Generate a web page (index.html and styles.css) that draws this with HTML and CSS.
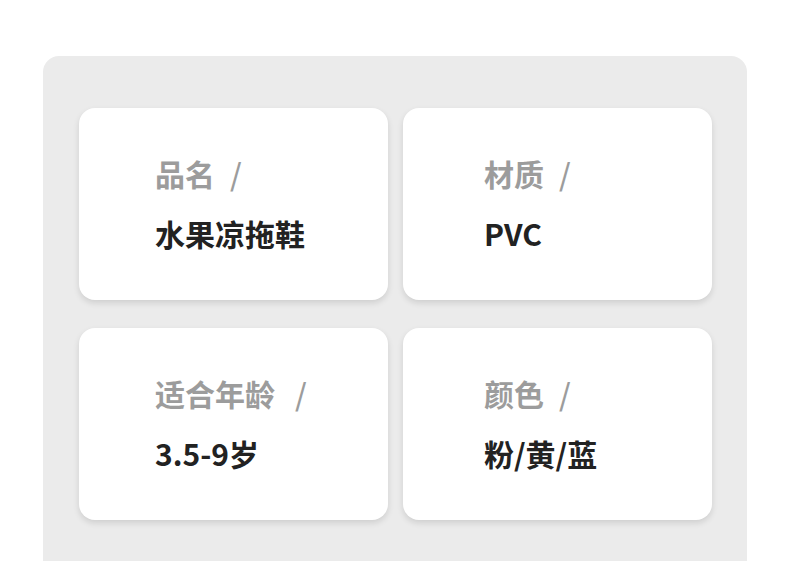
FILE: index.html
```
<!DOCTYPE html>
<html lang="zh">
<head>
<meta charset="utf-8">
<link rel="stylesheet" href="styles.css">
</head>
<body>
<div class="panel">
  <div class="grid">
    <div class="card left">
      <div class="label">品名<span class="slash s1">/</span></div>
      <div class="value">水果凉拖鞋</div>
    </div>
    <div class="card right">
      <div class="label">材质<span class="slash s1">/</span></div>
      <div class="value">PVC</div>
    </div>
    <div class="card left">
      <div class="label">适合年龄<span class="slash s2">/</span></div>
      <div class="value">3.5-9岁</div>
    </div>
    <div class="card right">
      <div class="label">颜色<span class="slash s1">/</span></div>
      <div class="value">粉/黄/蓝</div>
    </div>
  </div>
</div>
</body>
</html>
```
FILE: styles.css
```
html, body {
  margin: 0;
  padding: 0;
  background: #ffffff;
}
body {
  font-family: "Noto Sans CJK SC", "Noto Sans", sans-serif;
  width: 790px;
  height: 561px;
  overflow: hidden;
}
.panel {
  margin: 56px 0 0 43px;
  width: 704px;
  height: 505px;
  background: #ebebeb;
  border-radius: 16px 16px 0 0;
  padding: 52px 35px 0 36px;
  box-sizing: border-box;
}
.grid {
  display: grid;
  grid-template-columns: 309px 309px;
  grid-auto-rows: 192px;
  column-gap: 15px;
  row-gap: 28px;
}
.card {
  background: #ffffff;
  border-radius: 16px;
  box-shadow: 0 3px 6px rgba(0, 0, 0, 0.12);
  padding-top: 50px;
  box-sizing: border-box;
}
.card.left { padding-left: 76px; }
.card.right { padding-left: 81px; }
.label {
  font-size: 30px;
  line-height: 30px;
  font-weight: 700;
  color: #9c9c9c;
  white-space: nowrap;
}
.slash {
  font-weight: 500;
  font-size: 30px;
}
.s1 { margin-left: 15px; }
.s2 { margin-left: 20px; }
.value {
  margin-top: 30px;
  font-size: 30px;
  line-height: 30px;
  font-weight: 700;
  color: #222222;
  white-space: nowrap;
}
```
